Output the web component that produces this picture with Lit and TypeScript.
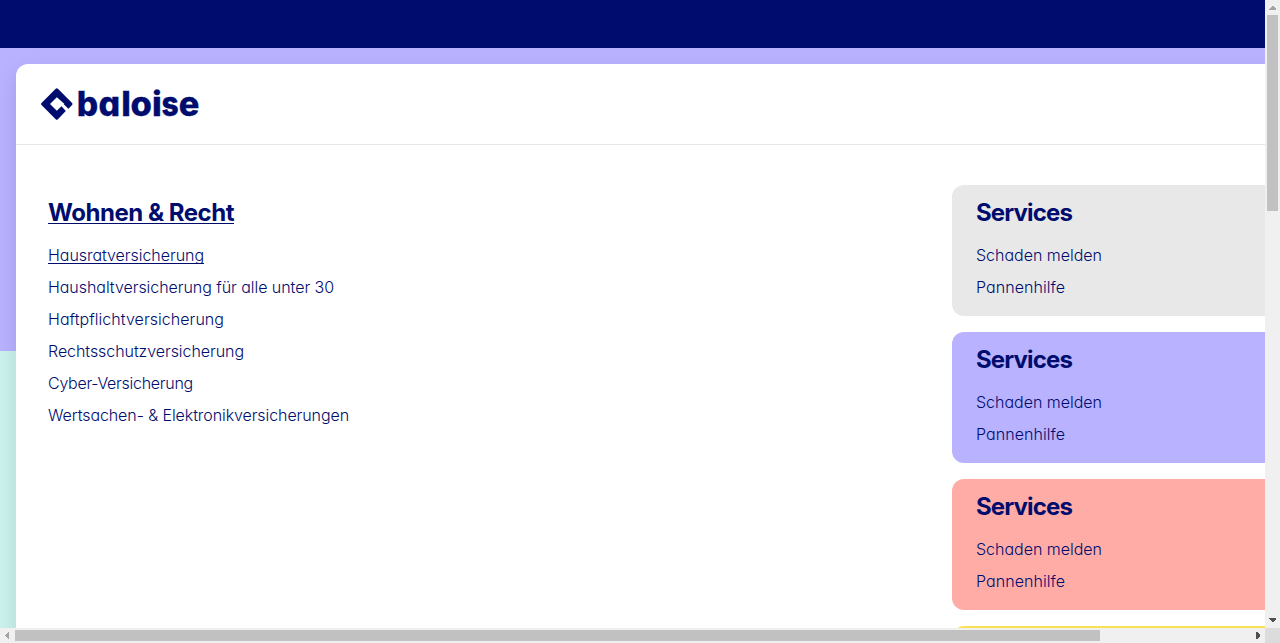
import { LitElement, html, svg, css } from "lit";
import { customElement, property } from "lit/decorators.js";

interface Label { text: string; width: number; active?: boolean }

/** A line of text whose tracking is adjusted to fill a given measure. */
@customElement("fitted-text")
class FittedText extends LitElement {
  @property() text = "";
  @property({ type: Number }) width = 0;
  static styles = css`
    :host { display: inline-block; white-space: nowrap; }
    span { display: inline-block; font-kerning: normal; }
  `;
  updated() {
    const el = this.renderRoot.querySelector("span") as HTMLElement;
    el.style.letterSpacing = "0";
    const natural = el.getBoundingClientRect().width;
    el.style.letterSpacing = `${(this.width - natural) / this.text.length}px`;
  }
  render() { return html`<span>${this.text}</span>`; }
}

@customElement("app-root")
class AppRoot extends LitElement {
  static styles = css`
    :host {
      display: grid;
      grid-template-columns: 1265px 15px;
      grid-template-rows: 628px 15px;
      width: 1280px;
      height: 643px;
      overflow: hidden;
      color: #000d6e;
      font-family: Inter, "Open Sans", sans-serif;
      font-feature-settings: "cv11";
      font-size: 16px;
      font-weight: 350;
    }
    * { box-sizing: border-box; }
    .page {
      display: flex;
      flex-direction: column;
      overflow: hidden;
      background: linear-gradient(#b8b2ff 351px, #cbf2ec 351px);
    }
    .topbar { flex: none; height: 48px; background: #000d6e; }
    .stage { flex: 1; padding: 16px 0 0 16px; min-height: 0; }
    .card {
      width: 1400px;
      height: 900px;
      background: #fff;
      border-radius: 12px;
      box-shadow: 0 8px 20px rgba(0, 13, 60, 0.12);
    }
    header { height: 81px; padding: 16px 24px; border-bottom: 1px solid #e6e6e6; }
    .logo { display: block; width: 160px; height: 48px; fill: #000d6e; }
    .wordmark {
      font: 800 34px Inter, sans-serif;
      font-feature-settings: "cv11";
      stroke: #000d6e;
      stroke-width: 0.3px;
    }
    .columns {
      display: grid;
      grid-template-columns: 904px 400px;
      padding-top: 40px;
      padding-left: 32px;
    }
    .services { display: flex; flex-direction: column; gap: 16px; }
    .panel { height: 131px; border-radius: 12px; padding-left: 24px; }
    .grey { background: #e8e8e8; }
    .purple { background: #b8b2ff; }
    .red { background: #ffaca6; }
    .yellow { background: #fae052; }
    h2 {
      margin: 0;
      height: 55px;
      padding-top: 12px;
      font-size: 24px;
      line-height: 32px;
      font-weight: 700;
    }
    ul { list-style: none; margin: 0; padding: 0; }
    li { height: 32px; line-height: 31px; }
    .title-link, .active {
      background: linear-gradient(#000d6e, #000d6e) 0 26px / 100% 1px no-repeat;
    }
    .active { background-position: 0 23px; }
    .bar { display: block; }
    .corner { background: #dcdcdc; }
  `;

  private products: Label[] = [
    { text: "Hausratversicherung", width: 156, active: true },
    { text: "Haushaltversicherung für alle unter 30", width: 286 },
    { text: "Haftpflichtversicherung", width: 176 },
    { text: "Rechtsschutzversicherung", width: 196 },
    { text: "Cyber-Versicherung", width: 145 },
    { text: "Wertsachen- & Elektronikversicherungen", width: 301 },
  ];
  private services: Label[] = [
    { text: "Schaden melden", width: 126 },
    { text: "Pannenhilfe", width: 89 },
  ];

  private list(items: Label[]) {
    return html`<ul>${items.map((i) => html`<li><fitted-text
      class=${i.active ? "active" : ""} .text=${i.text} .width=${i.width}></fitted-text></li>`)}</ul>`;
  }

  private logo() {
    const letters: [string, number, number][] = [
      ["b", 36.7, 21.4], ["a", 58.4, 21.6], ["l", 81.2, 9.6], ["o", 90.5, 21.4],
      ["i", 112, 9.8], ["s", 121.6, 17.2], ["e", 138.8, 20.6],
    ];
    return html`<svg class="logo" viewBox="0 0 160 48">
      <path d="M1.5 23 15.7 8.8Q16.8 7.7 17.9 8.8L32.1 23Q33 24 32.1 25L28.4 28.8 23.8 24.2 24.3 23.7 16.8 17.3 10 24 16.8 30.8 21.5 26.2 25.8 30.9 17.9 39.2Q16.8 40.3 15.7 39.2L1.5 25Q.5 24 1.5 23Z"/>
      ${letters.map(([c, x, w]) => svg`<text class="wordmark" x=${x} y="35.7"
        textLength=${w} lengthAdjust="spacingAndGlyphs">${c}</text>`)}
    </svg>`;
  }

  render() {
    return html`
      <div class="page">
        <div class="topbar"></div>
        <div class="stage">
          <div class="card">
            <header>${this.logo()}</header>
            <div class="columns">
              <section>
                <h2><fitted-text class="title-link" .text=${"Wohnen & Recht"} .width=${186}></fitted-text></h2>
                ${this.list(this.products)}
              </section>
              <div class="services">
                ${["grey", "purple", "red"].map((c) => html`
                  <section class="panel ${c}">
                    <h2><fitted-text .text=${"Services"} .width=${96}></fitted-text></h2>
                    ${this.list(this.services)}
                  </section>`)}
                <section class="panel yellow"></section>
              </div>
            </div>
          </div>
        </div>
      </div>
      <svg class="bar" width="15" height="628" shape-rendering="crispEdges">
        <rect width="15" height="628" fill="#f0f0f0"/>
        <rect x="2" y="15" width="11" height="196" fill="#c1c1c1"/>
        <path d="M4 10V9L7 6H8L11 9V10Z" fill="#a3a3a3"/>
        <path d="M4 618V619L7 622H8L11 619V618Z" fill="#505050"/>
      </svg>
      <svg class="bar" width="1265" height="15" shape-rendering="crispEdges">
        <rect width="1265" height="15" fill="#f0f0f0"/>
        <rect x="15" y="2" width="1085" height="11" fill="#c1c1c1"/>
        <path d="M9 4H8L5 7V8L8 11H9Z" fill="#a3a3a3"/>
        <path d="M1256 4H1257L1260 7V8L1257 11H1256Z" fill="#505050"/>
      </svg>
      <div class="corner"></div>
    `;
  }
}
